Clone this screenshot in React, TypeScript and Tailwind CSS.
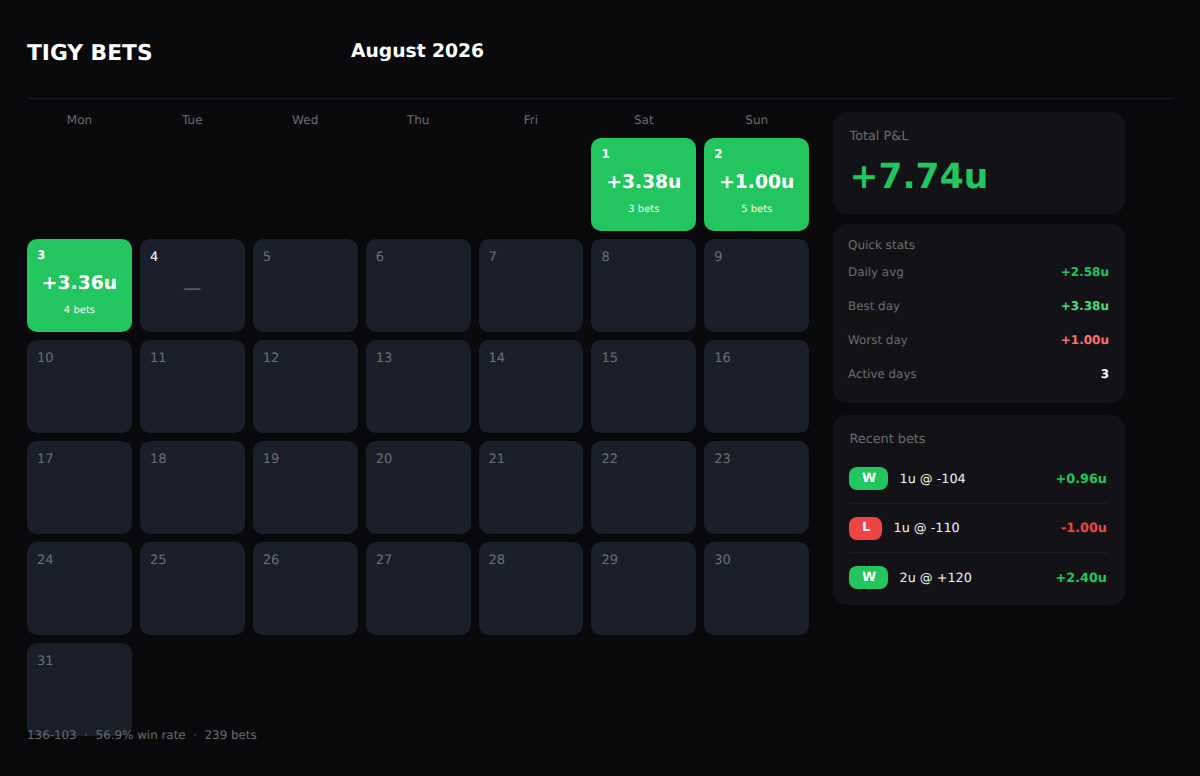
const weekdays = ["Mon", "Tue", "Wed", "Thu", "Fri", "Sat", "Sun"];

type Day = { day: number; pnl?: string; bets?: string; dash?: boolean };

const results: Record<number, Day> = {
  1: { day: 1, pnl: "+3.38u", bets: "3 bets" },
  2: { day: 2, pnl: "+1.00u", bets: "5 bets" },
  3: { day: 3, pnl: "+3.36u", bets: "4 bets" },
  4: { day: 4, dash: true },
};

const days: Day[] = Array.from({ length: 31 }, (_, i) => results[i + 1] ?? { day: i + 1 });

const stats = [
  { label: "Daily avg", value: "+2.58u", color: "text-[#22c55e]" },
  { label: "Best day", value: "+3.38u", color: "text-[#4ade80]" },
  { label: "Worst day", value: "+1.00u", color: "text-[#f87171]" },
  { label: "Active days", value: "3", color: "text-white" },
];

const bets = [
  { result: "W", stake: "1u @ -104", pnl: "+0.96u" },
  { result: "L", stake: "1u @ -110", pnl: "-1.00u" },
  { result: "W", stake: "2u @ +120", pnl: "+2.40u" },
];

const DayCell = ({ cell }: { cell: Day }) => {
  if (cell.pnl) {
    return (
      <div className="h-[93px] rounded-[10px] bg-[#22c55e] text-white flex flex-col items-center">
        <span className="self-start ml-[10px] mt-[9px] text-[12px] leading-[14px] font-bold">{cell.day}</span>
        <span className="mt-[10px] text-[18.72px] leading-[24px] font-bold">{cell.pnl}</span>
        <span className="mt-[9px] text-[10px] leading-[12px] text-[#f0fdf4]">{cell.bets}</span>
      </div>
    );
  }
  return (
    <div className="h-[93px] rounded-[10px] bg-[#1a1f2a] flex flex-col items-center">
      <span className={`self-start ml-[10px] mt-[11px] text-[13px] leading-[16px] ${cell.dash ? "text-white" : "text-[#6b6e76]"}`}>
        {cell.day}
      </span>
      {cell.dash && <span className="mt-[11px] text-[18px] leading-[24px] text-[#6b6e76]">—</span>}
    </div>
  );
};

export default function App() {
  return (
    <div
      className="w-[1200px] h-[776px] overflow-hidden bg-[#0a0a0c] text-white px-[27px] pt-[38px] [text-rendering:geometricPrecision]"
      style={{ fontFamily: '"DejaVu Sans", sans-serif' }}
    >
      <header className="flex items-start h-[60px] border-b border-[#1c1d22] w-[1147px] box-content">
        <h1 className="w-[324px] mt-[2px] text-[21.76px] leading-[28px] font-bold">TIGY BETS</h1>
        <h2 className="mt-[2px] text-[18.72px] leading-[24px] font-bold">August 2026</h2>
      </header>

      <div className="flex items-start gap-[23.8px]">
        <div className="w-[782.2px]">
          <div className="h-[39px] grid grid-cols-7 gap-[8px] items-center pt-[3px]">
            {weekdays.map((name) => (
              <div key={name} className="text-center text-[12px] leading-[16px] text-[#6b6b70]">
                {name}
              </div>
            ))}
          </div>
          <div className="h-[589px] grid grid-cols-7 gap-[8px] content-start">
            {Array.from({ length: 5 }, (_, i) => (
              <div key={i} className="h-[93px]" />
            ))}
            {days.map((cell) => (
              <DayCell key={cell.day} cell={cell} />
            ))}
          </div>
          <p className="relative text-[11.9px] leading-[16px] text-[#6b6b70] whitespace-pre">136-103  ·  56.9% win rate  ·  239 bets</p>
        </div>

        <aside className="w-[292px] pt-[13px] flex flex-col">
          <section className="h-[102px] rounded-[14px] bg-[#131317] pl-[16.5px] pr-[17px] pt-[16px]">
            <div className="text-[12.8px] leading-[17px] text-[#6b6b70]">Total P&amp;L</div>
            <div className="mt-[10px] text-[34.56px] leading-[44px] font-bold text-[#22c55e]">+7.74u</div>
          </section>

          <section className="mt-[10px] h-[179px] rounded-[14px] bg-[#131317] px-[15px] pt-[13px]">
            <div className="text-[12px] leading-[16px] text-[#6b6b70]">Quick stats</div>
            <div className="mt-[2px]">
              {stats.map((stat) => (
                <div key={stat.label} className="h-[34px] flex items-center justify-between pr-[1px]">
                  <span className="text-[11.9px] leading-[16px] text-[#6b6b70]">{stat.label}</span>
                  <span className={`text-[12px] leading-[16px] font-bold ${stat.color}`}>{stat.value}</span>
                </div>
              ))}
            </div>
          </section>

          <section className="mt-[12px] h-[190px] rounded-[14px] bg-[#131317] pl-[16.5px] pr-[17px] pt-[16px]">
            <div className="text-[12.8px] leading-[17px] text-[#6b6b70] mb-[6px]">Recent bets</div>
            {bets.map((bet, i) => (
              <div
                key={bet.stake}
                className={`h-[49.7px] flex items-center border-b ${i < 2 ? "border-[#1c1d22]" : "border-transparent"}`}
              >
                <span
                  className={`h-[23px] rounded-[8px] flex items-center justify-center text-[12.8px] font-bold ${
                    bet.result === "W" ? "w-[39px] bg-[#22c55e]" : "w-[33px] bg-[#ef4444]"
                  }`}
                >
                  {bet.result}
                </span>
                <span className="ml-[11px] mt-[2px] text-[12.8px] text-[#f3f4f6]">{bet.stake}</span>
                <span className={`ml-auto mt-[2px] text-[12.8px] font-bold pr-[1px] ${bet.result === "W" ? "text-[#22c55e]" : "text-[#ef4444]"}`}>
                  {bet.pnl}
                </span>
              </div>
            ))}
          </section>
        </aside>
      </div>
    </div>
  );
}
